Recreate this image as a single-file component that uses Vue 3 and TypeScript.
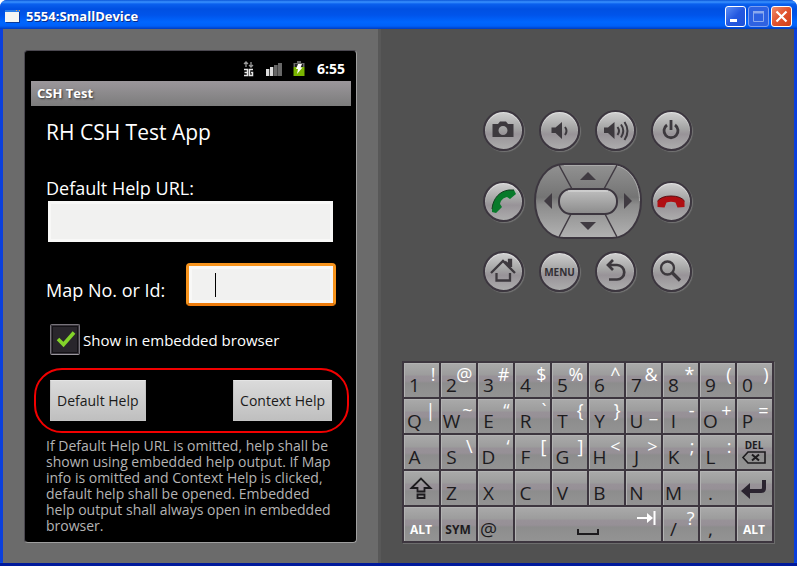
<script setup lang="ts">
import { ref } from 'vue'

interface Key {
  id: string
  main?: string
  alt?: string
  word?: string
  light?: boolean
}

const helpUrl = ref('')
const mapId = ref('')
const embedded = ref(true)

const pairs = (text: string): Key[] =>
  text.split(' ').map((pair) => ({ id: pair[0], main: pair[0], alt: pair.slice(1) }))

const keys: Key[] = [
  ...pairs('1! 2@ 3# 4$ 5% 6^ 7& 8* 9( 0)'),
  ...pairs('Q| W~ E“ R` T{ Y} U_ I- O+ P='),
  ...pairs('A S\\ D‘ F[ G] H< J> K; L:'),
  { id: 'del' },
  { id: 'shift' },
  ...pairs('Z X C V B N M .'),
  { id: 'enter' },
  { id: 'alt-left', word: 'ALT', light: true },
  { id: 'sym', word: 'SYM' },
  { id: 'at', main: '@' },
  { id: 'space' },
  ...pairs('/? ,'),
  { id: 'alt-right', word: 'ALT', light: true },
]
</script>

<template>
  <div class="window">
    <header class="titlebar">
      <svg class="app-icon" width="16" height="13" viewBox="0 0 16 13" aria-hidden="true">
        <path d="M0 1h15v11H0z" fill="#f6f6f2" />
        <path d="M0 0h15v2H0z" fill="#2b7de8" />
        <path d="M11 0h1v1h-1z M14 0h1v1h-1z" fill="#f59a3c" />
        <path d="M15 2v11H1v-1h13V2z" fill="#0a3a9c" />
      </svg>
      <h1 class="window-title">5554:SmallDevice</h1>
      <div class="window-buttons">
        <button class="wbtn" type="button" aria-label="Minimize">
          <svg width="19" height="19" viewBox="0 0 19 19"><path d="M4 12h7v3H4z" fill="#fff" /></svg>
        </button>
        <button class="wbtn wbtn-off" type="button" aria-label="Maximize" disabled>
          <svg width="19" height="19" viewBox="0 0 19 19">
            <path d="M4.500 5h10v9.500h-10z" fill="none" stroke="#8ba9ee" />
            <path d="M4 4h11v2.500H4z" fill="#8ba9ee" />
          </svg>
        </button>
        <button class="wbtn wbtn-close" type="button" aria-label="Close">
          <svg width="19" height="19" viewBox="0 0 19 19">
            <path d="M4.500 4.500l10 10M14.500 4.500l-10 10" stroke="#fff" stroke-width="2.200" />
          </svg>
        </button>
      </div>
    </header>

    <main class="body">
      <section class="left">
        <div class="phone">
          <div class="status">
            <svg width="11" height="16" viewBox="0 0 11 16" aria-label="3G">
              <path d="M3 1v5M1 3l2-2 2 2M8 1v5M6 4l2 2 2-2" fill="none" stroke="#999" stroke-width="1.300" />
              <path d="M1 8.500h3.500v6H1M1.500 11.500h3M10 8.500H6.500v6H9.500v-3H8" fill="none" stroke="#e6e6e6" stroke-width="1.500" />
            </svg>
            <svg class="signal" width="16" height="16" viewBox="0 0 16 16" aria-label="Signal">
              <path d="M0 8h4v7H0z M4 6h4v9H4z" fill="#dcdcdc" />
              <path d="M8 4h4v11H8z M12 2h4v13h-4z" fill="#686868" />
              <path d="M3.500 8v7M7.500 6v9M11.500 4v11" stroke="#444" />
            </svg>
            <svg class="battery" width="12" height="16" viewBox="0 0 12 16" aria-label="Charging">
              <path d="M4 0h4v2h3.500v4h-11V2H4z" fill="#686868" />
              <path d="M2 3h8v3H2z" fill="#222" />
              <path d="M.5 6h11v9H.5z" fill="#7ab500" />
              <path d="M5 3h4L7.500 6.500H9.500L4 13l1-5H3z" fill="#fff" />
            </svg>
            <span class="clock">6:55</span>
          </div>
          <div class="app-title">CSH Test</div>
          <form class="app" @submit.prevent>
            <h2>RH CSH Test App</h2>
            <label class="field-label" for="url">Default Help URL:</label>
            <input id="url" v-model="helpUrl" class="field url" type="text" />
            <div class="map-row">
              <label class="field-label" for="map">Map No. or Id:</label>
              <div class="focus-ring">
                <input id="map" v-model="mapId" class="field map" type="text" />
                <span class="caret"></span>
              </div>
            </div>
            <label class="check-row">
              <input v-model="embedded" type="checkbox" />
              <svg v-if="embedded" width="20" height="18" viewBox="0 0 20 18" aria-hidden="true">
                <path d="M2 9l5.500 5.500L18 2.500" fill="none" stroke="#83d32a" stroke-width="3.600" />
              </svg>
              <span>Show in embedded browser</span>
            </label>
            <div class="actions">
              <button type="button">Default Help</button>
              <button type="button">Context Help</button>
            </div>
            <p class="hint">
              If Default Help URL is omitted, help shall be<br />shown using embedded help output. If Map<br />info
              is omitted and Context Help is clicked,<br />default help shall be opened. Embedded<br />help output
              shall always open in embedded<br />browser.
            </p>
          </form>
        </div>
      </section>

      <section class="right">
        <div class="pad">
          <button class="round" type="button" aria-label="Camera">
            <svg viewBox="0 0 37 37">
              <path fill-rule="evenodd" d="M7.500 12h5.500l2-2.500h6l2 2.500h5.500v13h-21z M18 14a4.500 4.500 0 1 0 0 9a4.500 4.500 0 1 0 0-9z" fill="#3d393e" />
            </svg>
          </button>
          <button class="round" type="button" aria-label="Volume down">
            <svg viewBox="0 0 37 37">
              <path d="M10.500 15.500h4l6.500-5.500v17l-6.500-6h-4z" fill="#3d393e" />
              <path d="M24 15q3 4 0 8" fill="none" stroke="#3d393e" stroke-width="2" />
            </svg>
          </button>
          <button class="round" type="button" aria-label="Volume up">
            <svg viewBox="0 0 37 37">
              <path d="M7 15.500h4l6.500-5.500v17L11 21H7z" fill="#3d393e" />
              <path d="M20.500 15q3 4 0 8M24 12.500q4.500 6 0 13M27.500 10q6 9 0 18" fill="none" stroke="#3d393e" stroke-width="2" />
            </svg>
          </button>
          <button class="round" type="button" aria-label="Power">
            <svg viewBox="0 0 37 37">
              <path d="M14 13a7 7 0 1 0 8 0M18 8v10" fill="none" stroke="#3d393e" stroke-width="2.800" />
            </svg>
          </button>

          <button class="round" type="button" aria-label="Call">
            <svg viewBox="0 0 37 37">
              <path d="M7 26C8 15 15 8 24 7h5l2 4-6 5-3-2C18 15 16 17 15 21l2 3-6 6-4-1z" fill="#087a2b" />
              <path d="M7 26C8 15 15 8 24 7h5" fill="none" stroke="#123f20" />
            </svg>
          </button>
          <div class="dpad">
            <svg class="dpad-face" width="108" height="76" viewBox="0 0 108 76" aria-hidden="true">
              <defs>
                <linearGradient id="face" x1="0" y1="0" x2="0" y2="1">
                  <stop offset="0" stop-color="#929292" />
                  <stop offset=".45" stop-color="#747474" />
                  <stop offset=".55" stop-color="#8c8c8c" />
                  <stop offset="1" stop-color="#b2b2b2" />
                </linearGradient>
                <linearGradient id="pill" x1="0" y1="0" x2="0" y2="1">
                  <stop offset="0" stop-color="#c0c0c0" />
                  <stop offset="1" stop-color="#8b8b8b" />
                </linearGradient>
              </defs>
              <path d="M30 1h48c17 0 29 17 29 37S95 75 78 75H30C13 75 1 58 1 38S13 1 30 1z" fill="url(#face)" stroke="#3c363f" stroke-width="2" />
              <path d="M30 2.500h48c16 0 27.500 16 27.500 35.500" fill="none" stroke="#aaa" />
              <path d="M25 2l13 24M83 2L70 26M25 74l12-23M83 74L71 51" stroke="#403a42" stroke-width="1.500" />
              <rect x="25" y="26" width="58" height="25" rx="12" fill="url(#pill)" stroke="#3c363f" stroke-width="2" />
              <path d="M34 28h40" stroke="#ddd" />
              <path d="M46 17h16l-8-8zM46 59h16l-8 8zM10 38l8-8v16zM98 38l-8-8v16z" fill="#403b42" />
            </svg>
            <button class="up" type="button" aria-label="Up"></button>
            <button class="lt" type="button" aria-label="Left"></button>
            <button class="ok" type="button" aria-label="Select"></button>
            <button class="rt" type="button" aria-label="Right"></button>
            <button class="dn" type="button" aria-label="Down"></button>
          </div>
          <button class="round" type="button" aria-label="End call">
            <svg viewBox="0 0 37 37">
              <path d="M4.500 24v-6q4-5 13.500-5t13.500 5v6l-7 .5-2-5q-4.500-1.500-9 0l-2 5z" fill="#b00e12" />
              <path d="M4.500 18q4-5 13.500-5t13.500 5" fill="none" stroke="#571014" />
            </svg>
          </button>

          <button class="round" type="button" aria-label="Home">
            <svg viewBox="0 0 37 37">
              <path d="M6 20L18 8l12 12M11.500 20v7.500h13.500V20M20 8.500l4 3.500V7h2v7" fill="none" stroke="#3d393e" stroke-width="2.300" />
            </svg>
          </button>
          <button class="round menu" type="button">MENU</button>
          <button class="round" type="button" aria-label="Back">
            <svg viewBox="0 0 37 37">
              <path d="M16 7l-5 5 5 5M11.500 12H20a7 7 0 0 1 0 14.500h-8" fill="none" stroke="#3d393e" stroke-width="2.700" />
            </svg>
          </button>
          <button class="round" type="button" aria-label="Search">
            <svg viewBox="0 0 37 37">
              <circle cx="14.500" cy="15" r="6.500" fill="none" stroke="#3d393e" stroke-width="2.300" />
              <path d="M19 19.500l8 8" stroke="#3d393e" stroke-width="3.200" />
            </svg>
          </button>
        </div>

        <div class="keyboard">
          <button v-for="key in keys" :key="key.id" class="key" :class="'key-' + (key.main ? 'char' : key.id)" type="button" :aria-label="key.main || key.word || key.id">
            <span v-if="key.main" class="main">{{ key.main }}</span>
            <span v-if="key.alt" class="alt">{{ key.alt }}</span>
            <span v-if="key.word" class="word" :class="{ light: key.light }">{{ key.word }}</span>
            <template v-if="key.id === 'del'">
              <span class="del-text">DEL</span>
              <svg class="del-icon" width="26" height="13" viewBox="0 0 26 13">
                <path d="M2 6.500L7 1h17v11H7z" fill="none" stroke="#1d1b1e" stroke-width="1.600" />
                <path d="M11 3.500l7 6M18 3.500l-7 6" stroke="#1d1b1e" stroke-width="2" />
              </svg>
            </template>
            <svg v-else-if="key.id === 'shift'" class="icon" width="24" height="24" viewBox="0 0 24 24">
              <path d="M2.500 12L12 2.500 21.500 12H15.500v3.500h-7V12z M8.500 18.500h7v3.500h-7z" fill="none" stroke="#1d1b1e" stroke-width="1.800" />
            </svg>
            <svg v-else-if="key.id === 'enter'" class="icon" width="26" height="22" viewBox="0 0 26 22">
              <path d="M8 14h12q3 0 3-3V3" fill="none" stroke="#2b2430" stroke-width="4" />
              <path d="M0 14l9-8v16z" fill="#2b2430" />
            </svg>
            <template v-else-if="key.id === 'space'">
              <svg class="tab" width="20" height="16" viewBox="0 0 20 16">
                <path d="M0 8h15M17.500 1v14" stroke="#fff" stroke-width="2" />
                <path d="M10 3l6 5-6 5z" fill="#fff" />
              </svg>
              <svg class="bar" width="22" height="7" viewBox="0 0 22 7">
                <path d="M1 0v5h20V0" fill="none" stroke="#1d1b1e" stroke-width="2" />
              </svg>
            </template>
          </button>
        </div>
      </section>
    </main>
  </div>
</template>

<style>
body {
  margin: 0;
  background: #fff;
}
</style>

<style scoped>
* {
  box-sizing: border-box;
}
button,
input {
  font-family: inherit;
  margin: 0;
  padding: 0;
}
svg {
  display: block;
}
.window {
  min-height: 100vh;
  display: flex;
  flex-direction: column;
  font-family: "Open Sans", "Noto Sans", sans-serif;
  background: #0a3fdc;
  border-radius: 7px 7px 0 0;
  overflow: hidden;
}
.titlebar {
  height: 29px;
  display: flex;
  align-items: center;
  gap: 5px;
  padding: 3px 5px 0;
  background: linear-gradient(#0a55d8 0, #3a92ff 2px, #0a60ee 4px, #0050e2 9px, #0054ea 15px, #0066ff 22px, #0060f8 26px, #003cc0 29px);
}
.window-title {
  flex: 1;
  margin: 0;
  font-size: 13px;
  line-height: 16px;
  font-weight: 700;
  color: #fff;
  text-shadow: 1px 1px 0 #0a2a86;
}
.window-buttons {
  display: flex;
  gap: 2px;
}
.wbtn {
  width: 21px;
  height: 21px;
  border: 1px solid #fff;
  border-radius: 3px;
  background: linear-gradient(135deg, #5d8ff5, #2458e0 50%, #1f52d8);
}
.wbtn-off {
  border-color: #7d9ff0;
  background: #2e62e2;
}
.wbtn-close {
  background: linear-gradient(135deg, #f08c6c, #e0522e 50%, #d04018);
}
.body {
  flex: 1;
  display: grid;
  grid-template-columns: 378fr 413fr;
  padding: 0 3px;
  border-bottom: 3px solid #001a9c;
  box-shadow: inset 0 -1px 0 #0a4ae0;
}
.left {
  display: flex;
  padding: 21px 21px 20px;
  background: #6b6b6b;
  border-right: 3px solid #585858;
}
.phone {
  flex: 1;
  padding: 0 5px 6px 6px;
  background: #000;
  border: 1px solid #4b4850;
  border-right-color: #a0a0a0;
  border-bottom-color: #a0a0a0;
  border-radius: 4px;
  color: #fff;
}
.status {
  height: 30px;
  display: flex;
  align-items: center;
  justify-content: flex-end;
  padding: 5px 6px 0 0;
}
.signal {
  margin-left: 12px;
}
.battery {
  margin-left: 11px;
}
.clock {
  margin-left: 12px;
  font-size: 14px;
  line-height: 20px;
  font-weight: 700;
}
.app-title {
  height: 25px;
  padding-left: 6px;
  font-size: 13px;
  line-height: 25px;
  font-weight: 700;
  background: linear-gradient(#9b979b, #7c7c7c);
  text-shadow: 1px 1px 2px #333;
}
.app {
  padding: 0 15px;
}
h2 {
  margin: 12px 0 29px;
  font-size: 21px;
  line-height: 28px;
  font-weight: 400;
}
.field-label {
  display: block;
  font-size: 18px;
  line-height: 26px;
  white-space: nowrap;
}
.field {
  display: block;
  border: 0;
  outline: 0;
  background: #f1f1f0;
  box-shadow: inset 0 0 0 3px #f8f8f7;
  font-size: 16px;
}
.url {
  width: calc(100% - 5px);
  height: 41px;
  margin-left: 2px;
}
.map-row {
  display: flex;
  justify-content: space-between;
  margin-top: 21px;
}
.map-row .field-label {
  padding-top: 14px;
}
.focus-ring {
  position: relative;
  width: 150px;
  height: 43px;
  border: 3px solid #f7941d;
  border-bottom-color: #ee7c0c;
  border-radius: 4px;
}
.map {
  width: 100%;
  height: 100%;
  padding: 0 26px;
}
.caret {
  position: absolute;
  left: 26px;
  top: 7px;
  width: 1px;
  height: 24px;
  background: #000;
}
.check-row {
  position: relative;
  display: flex;
  align-items: center;
  gap: 3px;
  margin: 18px 0 13px 4px;
  font-size: 15px;
  line-height: 22px;
}
.check-row input {
  appearance: none;
  width: 30px;
  height: 31px;
  border: 1px solid #77737a;
  border-bottom-color: #9b979e;
  border-radius: 2px;
  background: #29262c;
  box-shadow: inset 0 0 0 1px #3a363d, inset 0 0 0 2px #141216;
}
.check-row svg {
  position: absolute;
  left: 6px;
  top: 6px;
}
.actions {
  display: flex;
  justify-content: space-between;
  margin: 0 -13px 0 -12px;
  padding: 10px 15px 10px 14px;
  border: 2px solid #f20000;
  border-radius: 28px;
}
.actions button {
  height: 41px;
  padding: 0 6px;
  border: 1px solid #c4c4c4;
  border-top-color: #e4e4e4;
  background: linear-gradient(#dadada, #cdcdcd 50%, #bfbfbf);
  color: #1a1a1a;
  font-size: 14px;
}
.hint {
  margin: 5px 0 0;
  font-size: 14px;
  line-height: 16px;
  color: #b4b4b4;
  white-space: nowrap;
}
.right {
  display: flex;
  flex-direction: column;
  align-items: center;
  padding: 81px 20px 20px;
  background: #515151;
}
.pad {
  display: grid;
  grid-template-columns: repeat(4, 41px);
  gap: 12px 15px;
  align-items: center;
}
.round {
  width: 41px;
  height: 41px;
  border: 2px solid #3c363f;
  border-radius: 50%;
  background: linear-gradient(#cfcfcf, #a4a4a4 45%, #989398 60%, #adadad);
  box-shadow: 1px 1px 1px #757575, inset 0 1px 1px #e2e2e2;
  color: #343036;
}
.round svg {
  width: 37px;
  height: 37px;
}
.menu {
  font-size: 10px;
  font-weight: 700;
}
.dpad {
  grid-column: 2 / span 2;
  justify-self: center;
  position: relative;
  width: 108px;
  height: 76px;
  display: grid;
  grid-template: 26px 25px 25px / 25px 58px 25px;
  grid-template-areas: ". up ." "lt ok rt" ". dn .";
}
.dpad-face {
  position: absolute;
  inset: 0;
}
.dpad button {
  position: relative;
  border: 0;
  background: transparent;
}
.up {
  grid-area: up;
}
.lt {
  grid-area: lt;
}
.ok {
  grid-area: ok;
}
.rt {
  grid-area: rt;
}
.dn {
  grid-area: dn;
}
.keyboard {
  display: grid;
  grid-template-columns: repeat(10, 35px);
  grid-auto-rows: 34px;
  gap: 2px;
  margin-top: 69px;
  padding: 2px;
  background: #3d363f;
  box-shadow: 1px 1px 0 #6c6c6c;
}
.key {
  display: grid;
  grid-template: 34px / 1fr;
  border: 0;
  background: linear-gradient(#aaa, #9c9c9c 12px, #989298 13px, #969096 18px, #8d8d8d 20px, #939393);
  box-shadow: inset 1px 1px 0 #b3b3b3;
  color: #1d1b1e;
}
.key > * {
  grid-area: 1 / 1;
}
.key-space {
  grid-column: span 4;
}
.main {
  place-self: end start;
  width: 22px;
  display: flex;
  justify-content: center;
  margin-bottom: 1px;
  font-size: 19px;
  line-height: 22px;
}
.alt {
  place-self: start end;
  margin-right: 3px;
  font-size: 18px;
  line-height: 22px;
  color: #fff;
}
.word {
  place-self: end center;
  margin-bottom: 3px;
  font-size: 12px;
  line-height: 16px;
  font-weight: 700;
}
.light {
  color: #fff;
}
.del-text {
  place-self: start center;
  margin-top: 4px;
  font-size: 10px;
  line-height: 12px;
  font-weight: 700;
}
.del-icon {
  place-self: end center;
  margin-bottom: 5px;
}
.icon {
  place-self: center;
}
.tab {
  place-self: start end;
  margin: 3px 4px 0 0;
}
.bar {
  place-self: end center;
  margin-bottom: 5px;
}
</style>
